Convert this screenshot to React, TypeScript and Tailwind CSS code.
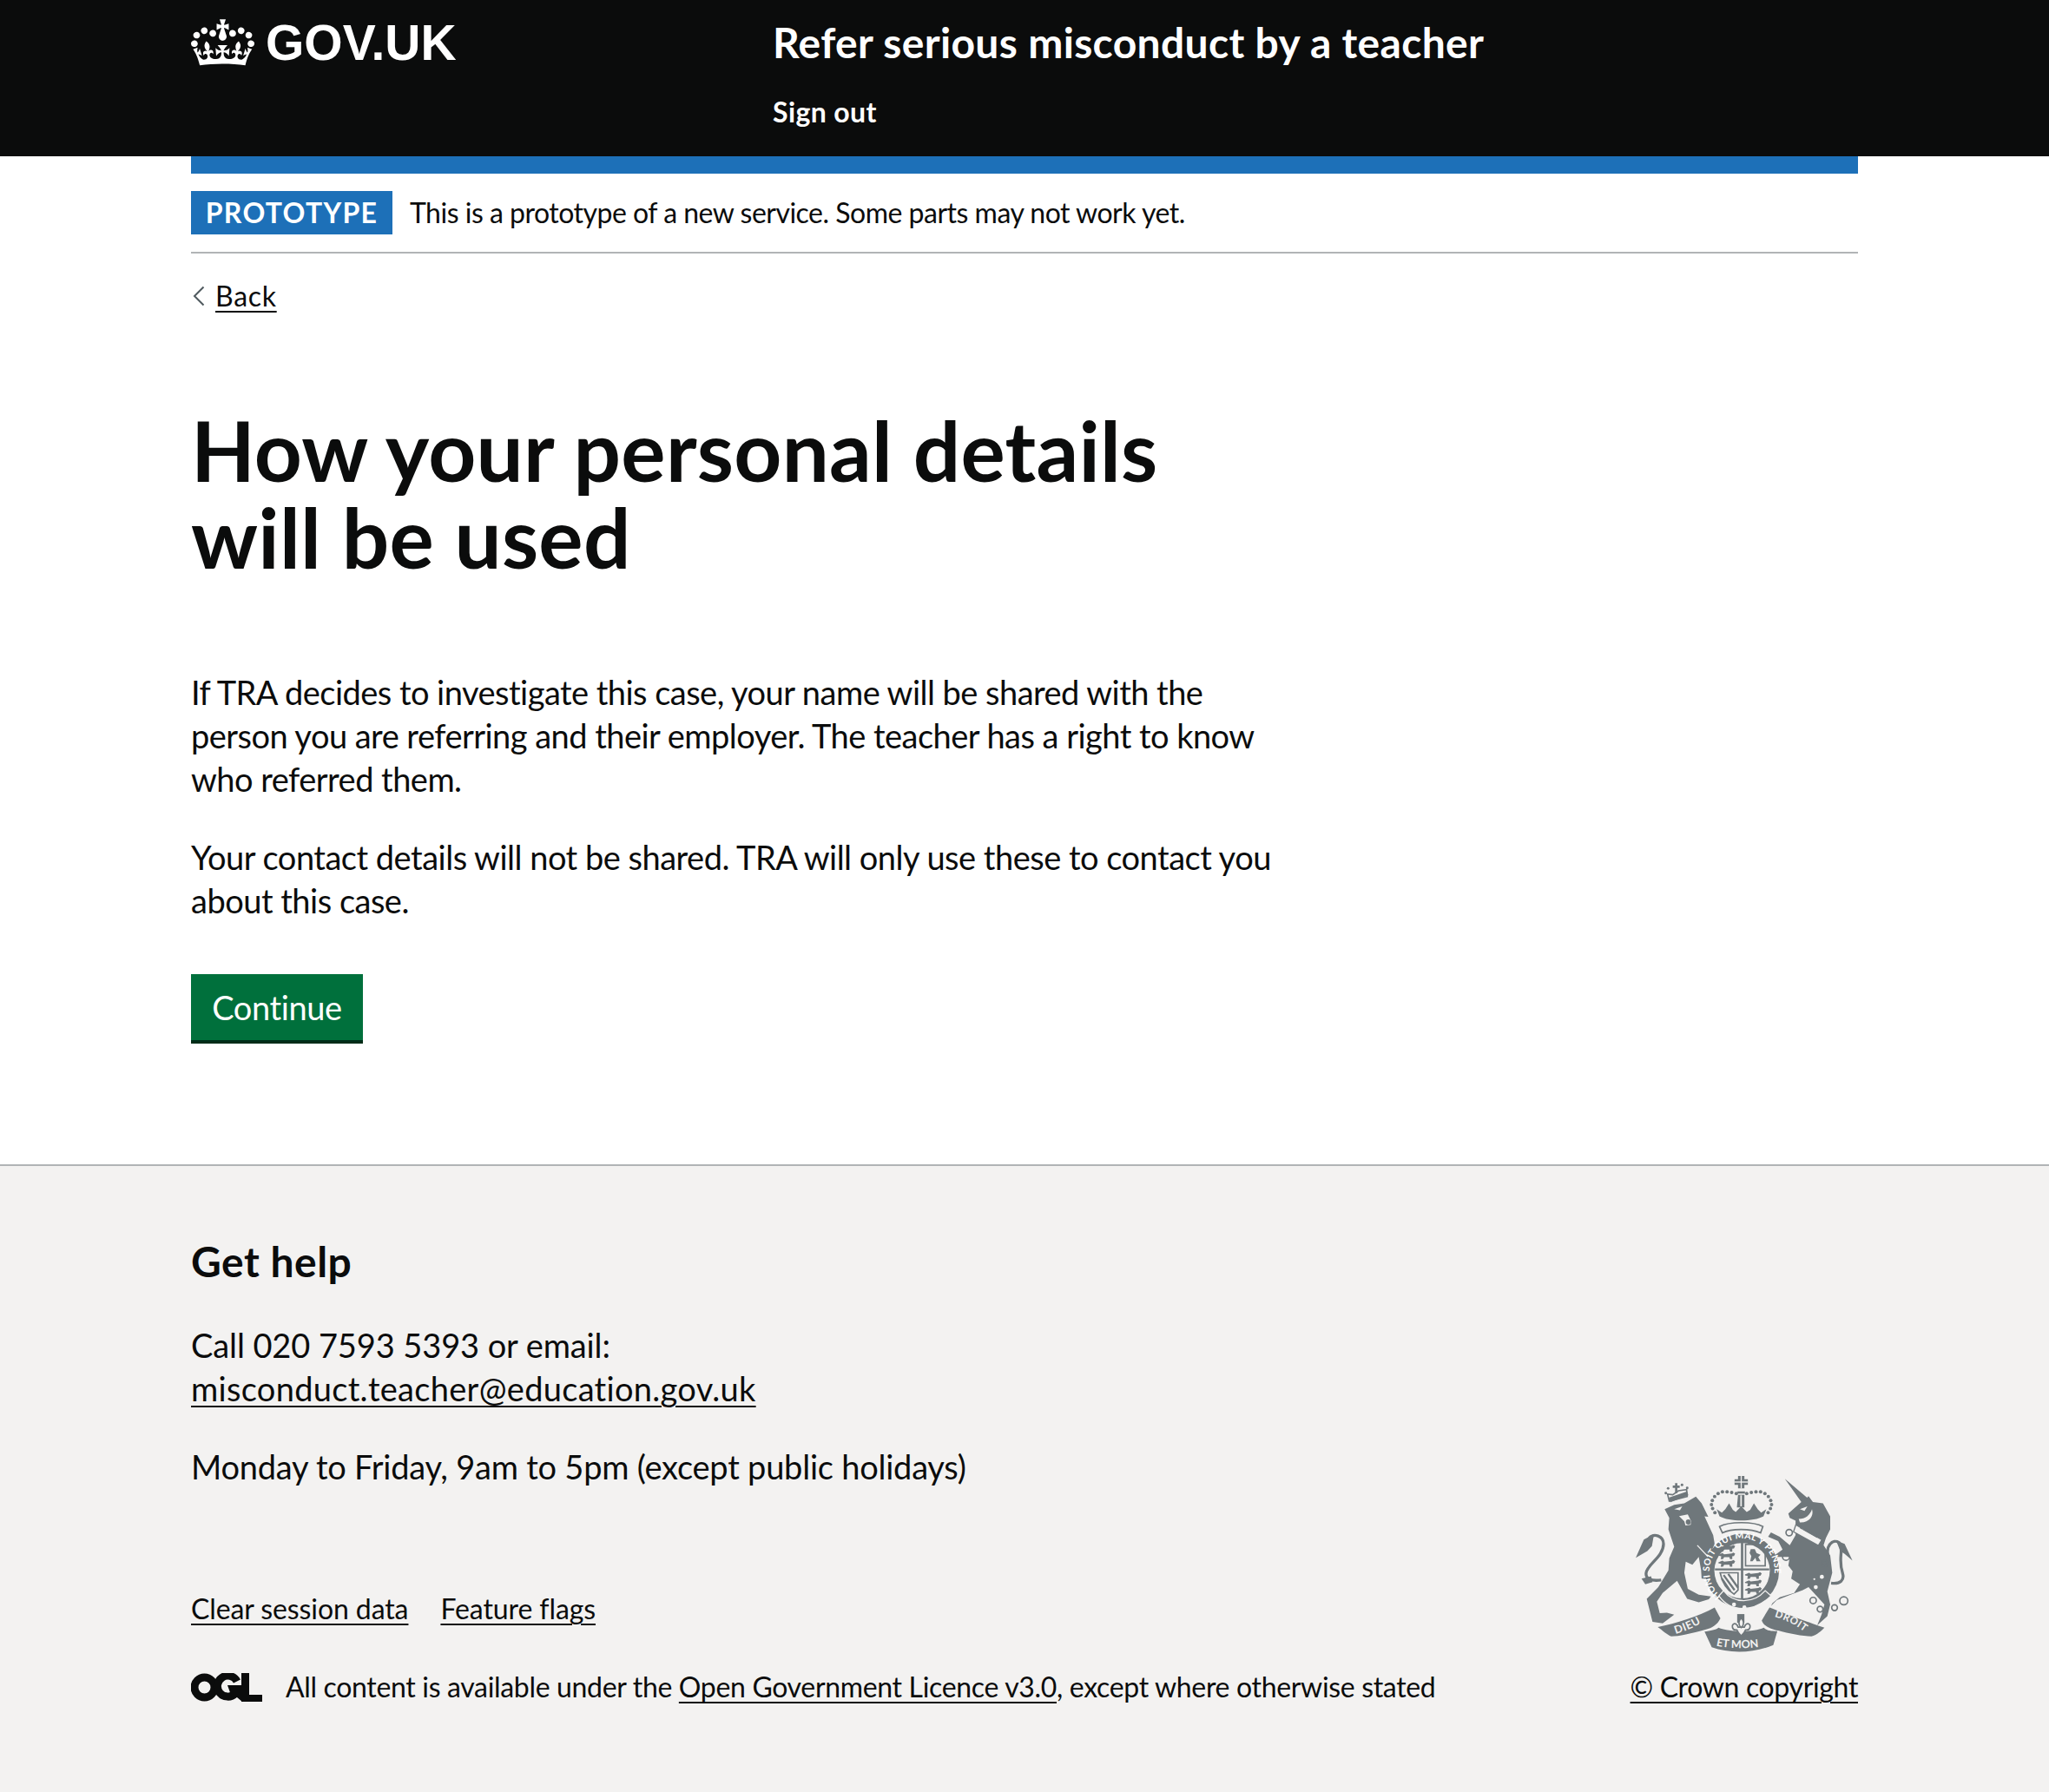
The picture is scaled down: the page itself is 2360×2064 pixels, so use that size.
const linkClass = 'underline decoration-2 underline-offset-[5px]';

function CrownLogo() {
  return (
    <svg viewBox="0 0 132 97" className="w-[73px] h-[54px] shrink-0" fill="currentColor" aria-hidden="true">
      <path
        fillRule="evenodd"
        d="M25 30.2c3.5 1.5 7.7-.2 9.1-3.7 1.5-3.6-.2-7.8-3.9-9.2-3.6-1.4-7.6.3-9.1 3.9-1.4 3.5.3 7.5 3.9 9zM9 39.5c3.6 1.5 7.8-.2 9.2-3.7 1.5-3.6-.2-7.8-3.9-9.1-3.6-1.5-7.6.2-9.1 3.8-1.4 3.5.3 7.5 3.8 9zM4.4 57.2c3.5 1.5 7.7-.2 9.1-3.8 1.5-3.6-.2-7.7-3.9-9.1-3.5-1.5-7.6.3-9.1 3.8-1.4 3.5.3 7.6 3.9 9.1zm38.3-21.4c3.5 1.5 7.7-.2 9.1-3.8 1.5-3.6-.2-7.7-3.9-9.1-3.6-1.5-7.6.3-9.1 3.8-1.3 3.6.4 7.7 3.9 9.1zm64.4-5.6c-3.6 1.5-7.8-.2-9.1-3.7-1.5-3.6.2-7.8 3.8-9.2 3.6-1.4 7.7.3 9.2 3.9 1.3 3.5-.4 7.5-3.9 9zm15.9 9.3c-3.6 1.5-7.7-.2-9.1-3.7-1.5-3.6.2-7.8 3.7-9.1 3.6-1.5 7.7.2 9.2 3.8 1.5 3.5-.3 7.5-3.8 9zm4.7 17.7c-3.6 1.5-7.8-.2-9.2-3.8-1.5-3.6.2-7.7 3.9-9.1 3.6-1.5 7.7.3 9.2 3.8 1.3 3.5-.4 7.6-3.9 9.1zM89.3 35.8c-3.6 1.5-7.8-.2-9.2-3.8-1.4-3.6.2-7.7 3.9-9.1 3.6-1.5 7.7.3 9.2 3.8 1.4 3.6-.3 7.7-3.9 9.1zM69.7 17.7l8.9 4.7V9.3l-8.9 2.8c-.2-.3-.5-.6-.9-.9L72.4 0H59.6l3.5 11.2c-.3.3-.6.5-.9.9l-8.8-2.8v13.1l8.8-4.7c.3.3.6.7.9.9l-5 15.4v.1c-.2.8-.4 1.6-.4 2.4 0 4.1 3.1 7.5 7 8.1h.2c.3 0 .7.1 1 .1.4 0 .7 0 1-.1h.2c4-.6 7.1-4.1 7.1-8.1 0-.8-.1-1.7-.4-2.4V34l-5.1-15.4c.4-.2.7-.6 1-.9zM66 92.8c16.9 0 32.8 1.1 47.1 3.2 4-16.9 8.9-26.7 14-33.5l-9.6-3.4c1 4.9 1.1 7.2 0 10.2-1.5-1.4-3-4.3-4.2-8.7L108.6 76c2.8-2 5-3.2 7.5-3.3-4.4 9.4-10 11.9-13.6 11.2-4.3-.8-6.3-4.6-5.6-7.9 1-4.7 5.7-5.9 8-.5 4.3-8.7-3-11.4-7.6-8.8 7.1-7.2 7.9-13.5 2.1-21.1-8 6.1-8.1 12.3-4.5 20.8-4.7-5.4-12.1-2.5-9.5 6.2 3.4-5.2 7.9-2 7.2 3.1-.6 4.3-6.4 7.8-13.5 7.2-10.3-.9-10.9-8-11.2-13.8 2.5-.5 7.1 1.8 11 7.3L80.2 60c-4.1 4.4-8 5.3-12.3 5.4 1.4-4.4 8-11.6 8-11.6H55.5s6.4 7.2 7.9 11.6c-4.2-.1-8-1-12.3-5.4l1.4 16.4c3.9-5.5 8.5-7.7 10.9-7.3-.3 5.8-.9 12.8-11.1 13.8-7.2.6-12.9-2.9-13.5-7.2-.7-5 3.8-8.3 7.1-3.1 2.7-8.7-4.6-11.6-9.4-6.2 3.7-8.5 3.6-14.7-4.6-20.8-5.8 7.6-5 13.9 2.2 21.1-4.7-2.6-11.9.1-7.7 8.8 2.3-5.5 7.1-4.2 8.1.5.7 3.3-1.3 7.1-5.7 7.9-3.5.7-9-1.8-13.5-11.2 2.5.1 4.7 1.3 7.5 3.3l-4.7-15.4c-1.2 4.4-2.7 7.2-4.3 8.7-1.1-3-.9-5.3 0-10.2l-9.5 3.4c5 6.9 9.9 16.7 14 33.5 14.8-2.1 30.8-3.2 47.7-3.2z"
      />
    </svg>
  );
}

function OglLogo() {
  return (
    <svg viewBox="0 0 82 33" className="w-[82px] h-[33px] shrink-0" aria-hidden="true">
      <circle cx="15.5" cy="16.5" r="11.5" fill="none" stroke="#0b0c0c" strokeWidth="9" />
      <path d="M53 9.5a12 12 0 1 0-2 14" fill="none" stroke="#0b0c0c" strokeWidth="9" />
      <path d="M42 14h17v19l-6-5h-6z" fill="#0b0c0c" />
      <path d="M58 0h9v25h15v8H58z" fill="#0b0c0c" />
    </svg>
  );
}

function Lions({ x, y }: { x: number; y: number }) {
  // three small passant lions stacked in a shield quarter
  return (
    <g fill="#6f777b">
      {[0, 26, 52].map((dy) => (
        <path
          key={dy}
          d={`M${x} ${y + dy + 8}l14-6 6 4 26-3 6-3 6 4-4 8-6 1v10h-8l-2-7h-18l-4 7h-8l2-10-10-2z`}
        />
      ))}
    </g>
  );
}

function RoyalArms() {
  const c = '#6f777b';
  const bg = '#f3f2f1';
  return (
    <svg viewBox="70 65 755 610" className="w-[252px] h-[203px] mr-[5px]" aria-hidden="true">
      <defs>
        <path id="garter-ring" d="M367 481A113 113 0 1 1 513 481" />
        <path id="scroll-left" d="M210 612C250 600 285 585 320 560" />
        <path id="scroll-mid" d="M350 652C395 664 480 664 528 650" />
        <path id="scroll-right" d="M552 552C600 565 640 590 672 617" />
      </defs>

      {/* lion */}
      <g fill={c}>
        <path d="M172 180L205 165 240 160 280 136 300 160 323 206 310 205 340 270 345 300 325 345 345 395 342 420 300 420 298 390 290 345 268 372 245 362 240 400 252 456 290 476 332 482 325 492 290 502 250 490 215 428 165 470 145 500 155 540 180 538 205 545 165 575 130 570 110 490 150 450 185 392 188 350 205 310 185 250 188 210z" />
        <path d="M160 425C125 430 105 420 108 400 112 370 168 345 168 300 168 272 135 262 118 280" fill="none" stroke={c} strokeWidth="10" />
        <path d="M135 266L100 285 72 348 112 325 128 308zM92 420L125 412 130 432 105 440z" />
        {/* crown on the lion */}
        <path d="M188 152L182 128 200 130 220 116 248 112 250 136z" fill="none" stroke={c} strokeWidth="5" />
        <path d="M186 140L250 118 254 132 192 156z" />
        <path d="M200 98h8v-8h8v8h8v8h-8v18h-8v-18h-8z" />
        <circle cx="176" cy="124" r="4.5" />
        <circle cx="184" cy="108" r="4.5" />
        <circle cx="232" cy="96" r="4.5" />
        <circle cx="250" cy="106" r="4.5" />
      </g>
      <g fill={bg}>
        <path d="M205 180l28-10-8 14z" />
        <path d="M222 204l30-6 12 24-2 12-18 2-4-14z" />
      </g>
      <circle cx="254" cy="224" r="9" fill={c} />
      <path d="M285 305L332 355" stroke={bg} strokeWidth="4" />

      {/* unicorn */}
      <g fill={c}>
        <path d="M588 75L665 140 670 135 685 155 720 160 745 205 745 250 730 280 722 305 745 340 752 400 735 465 745 510 735 550 700 582 715 545 725 510 670 450 650 460 610 475 560 495 540 515 545 505 570 485 620 470 640 440 610 420 615 395 600 375 605 345 545 345 580 320 565 290 530 275 540 260 570 275 605 305 625 270 625 220 605 210 600 195 645 155z" />
        <path d="M740 350C725 305 755 282 775 295 795 315 770 350 788 402 795 425 780 440 748 436" fill="none" stroke={c} strokeWidth="10" />
        <path d="M765 288L795 300 822 358 795 335 780 325z" />
      </g>
      <g fill={bg}>
        <circle cx="716" cy="414" r="7" />
        <circle cx="695" cy="450" r="7" />
        <circle cx="690" cy="422" r="3.5" />
        <path d="M640 180l26-10-10 16z" />
        <path d="M636 214C660 214 675 200 682 180 690 205 670 228 640 226z" />
      </g>
      <path d="M626 234L716 286 704 306 618 258z" fill={bg} stroke={c} strokeWidth="4" />
      <path d="M640 246l3-12 4 14 9 3 3-10 5 14 10 4 3-10 5 13 10 5 3-9 4 12 6 5-6 4-68-38z" fill={c} />
      <g fill="none" stroke={c} strokeWidth="5">
        <circle cx="603" cy="261" r="11" />
        <circle cx="592" cy="345" r="12" />
        <circle cx="726" cy="368" r="10" />
        <circle cx="686" cy="496" r="11" />
        <circle cx="710" cy="526" r="10" />
        <circle cx="760" cy="521" r="10" />
        <circle cx="792" cy="497" r="14" />
      </g>

      {/* crown */}
      <g fill={c}>
        <path d="M426 62h22v14h12v20h-12v12h-22V96h-12V76h12z" />
        <path d="M424 118h26v8h-26zM426 130h22v44h-26z" />
        <path d="M362 205L352 180 370 192 382 180 395 160 408 182 418 190 437 170 456 190 468 182 481 160 494 180 506 192 524 180 514 205C480 224 395 224 362 205z" />
      </g>
      <g fill={bg}>
        <rect x="435" y="62" width="4" height="46" />
        <rect x="414" y="84" width="46" height="4" />
        <rect x="434" y="132" width="5" height="38" />
      </g>
      <g fill={c}>
        {[
          [420, 126], [404, 122], [388, 120], [372, 120], [357, 126], [345, 136], [337, 150], [334, 164], [338, 178], [346, 192],
          [456, 126], [472, 122], [488, 120], [504, 120], [519, 126], [531, 136], [539, 150], [542, 164], [538, 178], [530, 192],
        ].map(([x, y]) => (
          <circle key={`${x}-${y}`} cx={x} cy={y} r="6" />
        ))}
      </g>
      <path d="M362 240C395 222 480 222 512 240L504 262C470 246 402 246 372 262z" fill={bg} stroke={c} strokeWidth="5" />

      {/* shield and garter */}
      <circle cx="440" cy="393" r="128" fill={c} />
      <circle cx="440" cy="393" r="96" fill={bg} />
      <path d="M436 296h8v200h-8zM346 385h188v7H346z" fill={c} />
      <Lions x={358} y={304} />
      <rect x="452" y="302" width="68" height="74" fill="none" stroke={c} strokeWidth="5" />
      <path d="M470 318l14 0 6 14 14 6-8 8 8 14-14 0-4-12-10 12-8 0 4-18-6-10z" fill={c} />
      <path d="M364 400h62v60l-14 14C390 460 372 440 364 400z" fill="none" stroke={c} strokeWidth="5" />
      <path d="M376 408l38 52M392 404l34 48M370 420l30 44" stroke={c} strokeWidth="7" />
      <Lions x={450} y={398} />
      <g fill="white" fontFamily="'Lato', sans-serif" fontWeight="700" fontSize="31">
        <text letterSpacing="1.5">
          <textPath href="#garter-ring" startOffset="0">HONI SOIT QUI MAL Y PENSE</textPath>
        </text>
      </g>
      <path d="M360 480C400 538 480 538 540 480L520 462C480 508 410 508 376 462z" fill={c} stroke={bg} strokeWidth="4" />
      <circle cx="412" cy="510" r="7" fill={bg} />
      <circle cx="448" cy="520" r="7" fill={bg} />

      {/* scroll */}
      <g fill={c}>
        <rect x="423" y="543" width="25" height="30" />
        <path d="M148 588C210 575 290 550 345 520L365 558C355 580 335 592 315 596 265 610 220 620 195 620 180 615 165 600 148 588z" />
        <path d="M310 604C330 600 350 598 358 590 400 606 480 606 515 590 525 600 540 602 562 602L548 650C480 680 395 680 335 658z" />
        <path d="M725 590C680 575 600 545 535 520L508 565C515 585 540 595 565 600 600 610 650 620 680 620 700 615 715 600 725 590z" />
      </g>
      <path d="M437 556c-12 14-9 26 0 34 9-8 12-20 0-34zM414 576c-12 4-10 24 8 22 3 8 10 16 15 20 5-4 12-12 15-20 18 2 20-18 8-22-8 0-10 6-12 12h-22c-2-6-4-12-12-12z" fill={bg} stroke={c} strokeWidth="5" />
      <g fill={bg} fontFamily="'Lato', sans-serif" fontWeight="700" fontSize="38">
        <text letterSpacing="2">
          <textPath href="#scroll-left">DIEU</textPath>
        </text>
        <text>
          <textPath href="#scroll-mid">ET MON</textPath>
        </text>
        <text fontSize="35" letterSpacing="2">
          <textPath href="#scroll-right">DROIT</textPath>
        </text>
      </g>
    </svg>
  );
}

export default function App() {
  return (
    <div className="min-h-[2064px] flex flex-col bg-white text-[#0b0c0c] font-['Lato',sans-serif] text-[38px] leading-[50px]">
      {/* Header */}
      <header className="bg-[#0b0c0c] text-white h-[180px] shrink-0">
        <div className="w-[1920px] mx-auto flex">
          <div className="w-[670px] flex items-center gap-[13px] h-[98px] shrink-0">
            <CrownLogo />
            <span className="font-['Liberation_Sans',sans-serif] font-bold text-[57px] leading-none">GOV.UK</span>
          </div>
          <div className="pt-[21px]">
            <div className="font-bold text-[48px] leading-[56px] tracking-[0.33px]">Refer serious misconduct by a teacher</div>
            <a className="block font-bold text-[32px] leading-[40px] mt-[32px] tracking-[0.4px]">Sign out</a>
          </div>
        </div>
      </header>

      <main className="w-[1920px] mx-auto flex-1">
        <div className="h-[20px] bg-[#1d70b8]" />

        {/* Phase banner */}
        <div className="flex items-center gap-[20px] h-[92px] border-b-2 border-[#b1b4b6] text-[32px] leading-[40px]">
          <strong className="bg-[#1d70b8] text-white h-[50px] w-[232px] flex items-center justify-center font-bold tracking-[1.3px]">PROTOTYPE</strong>
          <span className="tracking-[-0.5px]">This is a prototype of a new service. Some parts may not work yet.</span>
        </div>

        {/* Back link */}
        <div className="flex items-center gap-[12px] mt-[29px] text-[32px] leading-[40px]">
          <svg viewBox="0 0 14 24" className="w-[14px] h-[24px] ml-[2px]" fill="none" stroke="#505a5f" strokeWidth="2" aria-hidden="true">
            <path d="M12.5 1.5L2 12l10.5 10.5" />
          </svg>
          <a className={`${linkClass} tracking-[0.7px]`}>Back</a>
        </div>

        <h1 className="font-bold text-[96px] leading-[100px] mt-[107px] tracking-[0.25px]">
          How your personal details
          <br />
          will be used
        </h1>

        <p className="mt-[104px] tracking-[-0.53px]">
          If TRA decides to investigate this case, your name will be shared with the
          <br />
          person you are referring and their employer. The teacher has a right to know
          <br />
          who referred them.
        </p>
        <p className="mt-[40px] tracking-[-0.5px]">
          Your contact details will not be shared. TRA will only use these to contact you
          <br />
          about this case.
        </p>

        <button className="block mt-[60px] h-[80px] w-[198px] bg-[#00703c] text-white border-b-4 border-[#002d18] tracking-[-0.4px]">Continue</button>
      </main>

      {/* Footer */}
      <footer className="bg-[#f3f2f1] border-t-2 border-[#b1b4b6] h-[723px] shrink-0">
        <div className="w-[1920px] mx-auto flex justify-between items-end pt-[80px]">
          <div>
            <h2 className="font-bold text-[48px] leading-[60px] tracking-[0.5px]">Get help</h2>
            <p className="mt-[41px]">
              <span className="tracking-[-0.1px]">Call 020 7593 5393 or email:</span>
              <br />
              <a className={`${linkClass} tracking-[0.3px]`}>misconduct.teacher@education.gov.uk</a>
            </p>
            <p className="mt-[40px] tracking-[-0.23px]">Monday to Friday, 9am to 5pm (except public holidays)</p>

            <div className="flex gap-[37px] mt-[119px] text-[32px] leading-[40px] tracking-[-0.1px]">
              <a className={linkClass}>Clear session data</a>
              <a className={linkClass}>Feature flags</a>
            </div>
            <div className="flex items-center gap-[27px] mt-[50px] text-[32px] leading-[40px]">
              <OglLogo />
              <span className="tracking-[-0.33px]">
                All content is available under the <a className={linkClass}>Open Government Licence v3.0</a>, except where otherwise stated
              </span>
            </div>
          </div>
          <div className="flex flex-col items-end">
            <RoyalArms />
            <a className={`${linkClass} text-[32px] leading-[40px] mt-[20px] tracking-[-0.35px]`}>© Crown copyright</a>
          </div>
        </div>
      </footer>
    </div>
  );
}
